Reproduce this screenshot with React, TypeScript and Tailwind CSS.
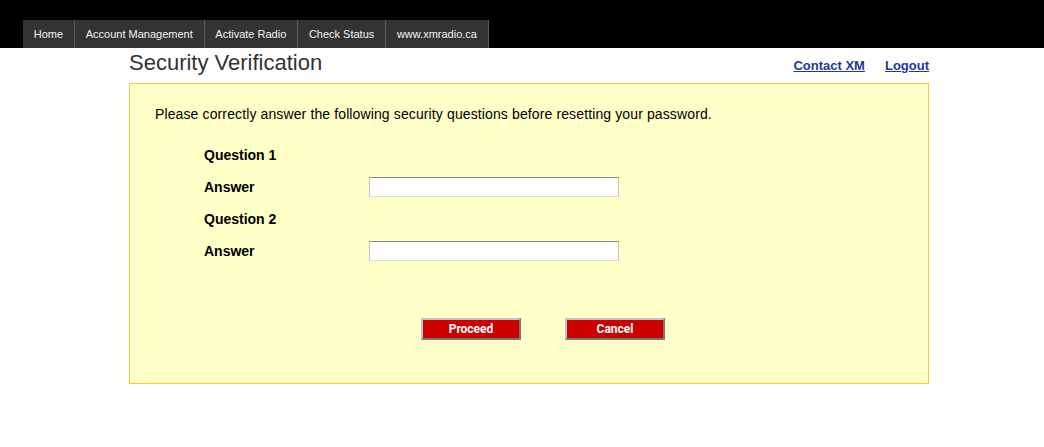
import React from "react";

const tabs = ["Home", "Account Management", "Activate Radio", "Check Status", "www.xmradio.ca"];

function Row({ label, input }: { label: string; input?: boolean }) {
  return (
    <div className="flex h-[32px] items-center">
      <div className="w-[165px] text-[14px] font-bold text-black">{label}</div>
      {input && (
        <input
          type="text"
          className="h-[20px] w-[250px] border border-t-[#8a8a8a] border-l-[#c4c4c4] border-r-[#c4c4c4] border-b-[#dadada] bg-white outline-none"
        />
      )}
    </div>
  );
}

function Btn({ label }: { label: string }) {
  return (
    <button
      type="button"
      className="h-[22px] w-[100px] border-2 border-t-[#c2c2c2] border-l-[#c2c2c2] border-b-[#767676] border-r-[#767676] bg-[#cc0000] text-[12px] font-bold leading-none text-white"
      style={{ fontFamily: "Roboto, 'Liberation Sans', sans-serif" }}
    >
      {label}
    </button>
  );
}

export default function App() {
  return (
    <div className="min-h-[447px] w-full bg-white" style={{ fontFamily: "'Liberation Sans', Arial, sans-serif" }}>
      <div className="flex h-[48px] items-end bg-black pl-[23px]">
        {tabs.map((t) => (
          <div
            key={t}
            className="flex h-[28px] items-center border-r border-[#5c5c5c] bg-[#333333] px-[10.8px] text-[11px] text-[#f2f2f2]"
          >
            {t}
          </div>
        ))}
      </div>
      <div className="ml-[129px] w-[800px]">
        <div className="flex h-[35px] items-baseline justify-between pt-[2px]">
          <h1 className="text-[22px] leading-[25px] text-[#333333]">Security Verification</h1>
          <div className="flex gap-[20px] text-[13px] font-bold">
            <a href="#" className="text-[#1b3a99] underline">Contact XM</a>
            <a href="#" className="text-[#1b3a99] underline">Logout</a>
          </div>
        </div>
        <div className="h-[301px] border border-[#f2cd3a] bg-[#ffffc8]">
          <p className="pl-[25px] pt-[22px] text-[14px] leading-[16px] tracking-[0.12px] text-black">
            Please correctly answer the following security questions before resetting your password.
          </p>
          <div className="mt-[17px] pl-[74px]">
            <Row label="Question 1" />
            <Row label="Answer" input />
            <Row label="Question 2" />
            <Row label="Answer" input />
          </div>
          <div className="mt-[51px] flex pl-[291px] gap-[44px]">
            <Btn label="Proceed" />
            <Btn label="Cancel" />
          </div>
        </div>
      </div>
    </div>
  );
}
